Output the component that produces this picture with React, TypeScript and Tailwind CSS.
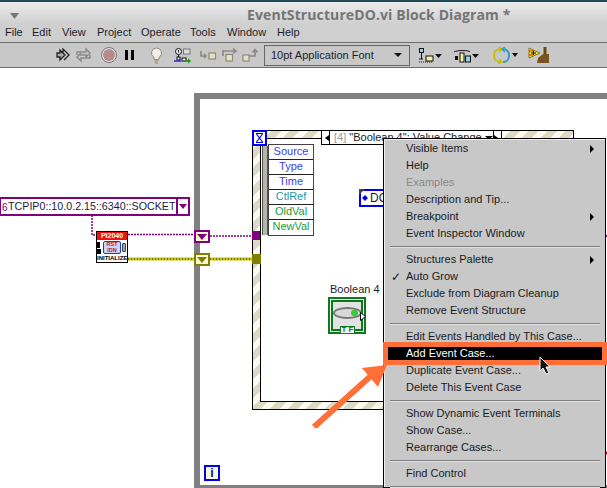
import React from "react";

type Item = { label?: string; sub?: boolean; check?: boolean; off?: boolean; active?: boolean; sep?: boolean };

const menuItems: Item[] = [
  { label: "Visible Items", sub: true },
  { label: "Help" },
  { label: "Examples", off: true },
  { label: "Description and Tip..." },
  { label: "Breakpoint", sub: true },
  { label: "Event Inspector Window" },
  { sep: true },
  { label: "Structures Palette", sub: true },
  { label: "Auto Grow", check: true },
  { label: "Exclude from Diagram Cleanup" },
  { label: "Remove Event Structure" },
  { sep: true },
  { label: "Edit Events Handled by This Case..." },
  { label: "Add Event Case...", active: true },
  { label: "Duplicate Event Case..." },
  { label: "Delete This Event Case" },
  { sep: true },
  { label: "Show Dynamic Event Terminals" },
  { label: "Show Case..." },
  { label: "Rearrange Cases..." },
  { sep: true },
  { label: "Find Control" },
  { sep: true },
];

const menuBar = [
  ["File", "w-[27px]"],
  ["Edit", "w-[30px]"],
  ["View", "w-[35px]"],
  ["Project", "w-[44px]"],
  ["Operate", "w-[49px]"],
  ["Tools", "w-[37px]"],
  ["Window", "w-[50px]"],
  ["Help", "w-[30px]"],
];

const nodeRows = [
  ["Source", "text-[#3b3bf5]"],
  ["Type", "text-[#3b3bf5]"],
  ["Time", "text-[#3b3bf5]"],
  ["CtlRef", "text-[#1f97a6]"],
  ["OldVal", "text-[#1f9a3c]"],
  ["NewVal", "text-[#1f9a3c]"],
];

const stripes = "bg-[repeating-linear-gradient(135deg,#dcdac4_0px,#dcdac4_7px,#fbfaf0_7px,#fbfaf0_13px)]";

function Toolbar() {
  return (
    <div className="flex h-[26px] items-center border-y border-[#6e6e6e] bg-[#c8c8c8] pl-[56px]">
      <svg width="14" height="15" viewBox="0 0 14 15" fill="none" stroke="#222" strokeWidth="1.3">
        <path d="M1 5h3V2l5 5-5 5V9H1z" fill="#aaa" />
        <path d="M5 4h2V1l6 6-5 5" />
      </svg>
      <svg className="ml-[5px]" width="17" height="16" viewBox="0 0 17 16" fill="none" stroke="#8a8a8a" strokeWidth="1.5">
        <path d="M2 8V5h9V2l4 4-4 4V8H5" />
        <path d="M15 8v3H6v3l-4-4 4-4" />
      </svg>
      <div className="ml-[9px] flex h-4 w-4 items-center justify-center rounded-full border border-[#777] bg-[#e3e3e3]">
        <div className="h-3 w-3 rounded-full bg-[#b98a8c]" />
      </div>
      <div className="ml-[8px] flex gap-[3px]">
        <div className="h-[10px] w-[3px] bg-black" />
        <div className="h-[10px] w-[3px] bg-black" />
      </div>
      <svg className="ml-[16px]" width="13" height="17" viewBox="0 0 13 17" fill="#efefe6" stroke="#8a8a80">
        <path d="M6.5 1a5 5 0 0 0-3 9c.6.6.7 1.5.7 2.5h4.6c0-1 .1-1.9.7-2.5a5 5 0 0 0-3-9z" />
        <path d="M4.5 14h4M5 16h3" stroke="#9a8a40" />
      </svg>
      <svg className="ml-[11px]" width="17" height="17" viewBox="0 0 17 17" fill="none">
        <circle cx="4.5" cy="4.5" r="3" fill="#eee" stroke="#111" />
        <path d="M4.5 3v2.5" stroke="#111" />
        <rect x="9.5" y="2" width="6.5" height="5" fill="#ddd" stroke="#777" />
        <path d="M4.5 8v4" stroke="#111" />
        <rect x="3" y="10" width="3" height="3" fill="#eee" stroke="#111" />
        <path d="M0 14h7" stroke="#1a1ae0" strokeWidth="1.4" />
        <rect x="8" y="11" width="4" height="3" fill="#eee" stroke="#111" />
        <path d="M12 14h3" stroke="#0a9a0a" strokeWidth="1.4" />
        <path d="M14 11.5l3 2.5-3 2.5z" fill="#0a9a0a" />
      </svg>
      <svg className="ml-[9px]" width="17" height="14" viewBox="0 0 17 14" fill="none" stroke="#8a8a80" strokeWidth="1.6">
        <path d="M1 3v5h5M4 6l2 2-2 2" />
        <rect x="9" y="5" width="6.5" height="6" fill="#e6e4b8" strokeWidth="1.2" />
      </svg>
      <svg className="ml-[5px]" width="16" height="16" viewBox="0 0 16 16" fill="none" stroke="#8a8a80" strokeWidth="1.6">
        <path d="M1 9V4h12M11 1.5L14 4l-3 2.5" />
        <rect x="4" y="7.5" width="6.5" height="6.5" fill="#e6e4b8" strokeWidth="1.2" />
      </svg>
      <svg className="ml-[4px]" width="16" height="16" viewBox="0 0 16 16" fill="none" stroke="#8a8a80" strokeWidth="1.6">
        <rect x="1" y="8" width="6" height="6" fill="#e6e4b8" strokeWidth="1.2" />
        <path d="M7 9h6V3M10.5 5.5L13 2.5l2.5 3" />
      </svg>
      <div className="ml-[6px] flex h-[21px] w-[146px] items-center justify-between border border-[#666] pl-[6px] pr-[7px] text-[11px] text-[#1c1c2c]">
        <span>10pt Application Font</span>
        <span className="h-0 w-0 border-x-[4px] border-t-[4px] border-x-transparent border-t-[#111]" />
      </div>
      <svg className="ml-[9px]" width="24" height="15" viewBox="0 0 24 15" fill="none">
        <rect x="0.5" y="0.5" width="4" height="4" fill="#8fd0ee" stroke="#111" />
        <path d="M2.5 5v6M0 11h4" stroke="#111" />
        <rect x="7" y="8" width="7" height="5" fill="#f3f3a8" stroke="#111" />
        <path d="M0 14h14" stroke="#111" strokeDasharray="1 1" />
        <path d="M16 6h7l-3.5 4z" fill="#111" />
      </svg>
      <svg className="ml-[11px]" width="26" height="15" viewBox="0 0 26 15" fill="none">
        <path d="M0 4c3-2 15-2 16 0" stroke="#111" />
        <rect x="1" y="8" width="3" height="4" fill="#111" />
        <rect x="6" y="5" width="4" height="9" fill="#f3f3a8" stroke="#111" />
        <rect x="11.500" y="8" width="5" height="6" fill="#8fd0ee" stroke="#111" />
        <path d="M18 6h7l-3.500 4z" fill="#111" />
      </svg>
      <svg className="ml-[12px]" width="26" height="17" viewBox="0 0 26 17" fill="none" strokeWidth="2">
        <path d="M9 2C4 2 2 5 2 8.500S4 15 9 15" stroke="#c9c200" />
        <path d="M6 0l4 2-3 3M7 12l3 3-4 2" stroke="#c9c200" strokeWidth="1.500" />
        <path d="M11 2c4 0 6 3 6 6.500S15 15 11 15" stroke="#2f9fc0" />
        <path d="M13 0l-3 2 3 3" stroke="#2f9fc0" strokeWidth="1.500" />
        <path d="M20 6h6l-3 4z" fill="#111" stroke="none" />
      </svg>
      <svg className="ml-[10px]" width="22" height="18" viewBox="0 0 22 18" fill="none">
        <path d="M1 2l11 5-11 5z" fill="#f1e42a" stroke="#8a7a10" />
        <path d="M1 5H6M1 9H5" stroke="#e01818" />
        <path d="M3 7h5M5.500 5v4" stroke="#111" />
        <path d="M17 1v8" stroke="#6b4a18" strokeWidth="3" />
        <path d="M10 12l5-4h6v9H9z" fill="#7a5420" />
      </svg>
    </div>
  );
}

function Wires() {
  return (
    <svg className="absolute left-0 top-0" width="607" height="420" viewBox="0 0 607 420" fill="none">
      <path d="M92 147v20h5" stroke="#800080" strokeWidth="1.500" strokeDasharray="2 1" />
      <path d="M128 166.500h67M210 168H384" stroke="#800080" strokeWidth="1.500" strokeDasharray="2 1" />
      <path d="M128 191H195M210 191H384" stroke="#c8c400" strokeWidth="3" />
      <path d="M128 191H195M210 191H384" stroke="#222" strokeWidth="1" strokeDasharray="1 2" />
      <path d="M365 248H384" stroke="#0a7a1a" strokeDasharray="1 1" />
      <path d="M605 168h2" stroke="#800080" strokeWidth="2" />
      <path d="M605 385h2" stroke="#d01010" strokeWidth="3" />
    </svg>
  );
}

function Diagram() {
  return (
    <>
      {/* while loop frame */}
      <div className="absolute left-[194px] top-[25px] h-[395px] w-[420px] border-b-[3px] border-l-[6px] border-t-[6px] border-[#808080]" />
      <div className="absolute left-[204px] top-[397px] flex h-4 w-4 items-center justify-center border-2 border-[#0000ee] bg-[#fbfbd2] text-[12px] font-bold leading-none text-[#0000ee]">
        i
      </div>

      {/* event structure */}
      <div className={`absolute left-[252px] top-[62px] h-[280px] w-[322px] border border-black p-[7px] ${stripes}`}>
        <div className="h-full w-full border border-black bg-white" />
      </div>
      <div className="absolute left-[252px] top-[62px] flex h-[16px] w-[15px] items-center justify-center border-2 border-[#0000ee] bg-white">
        <svg width="9" height="10" viewBox="0 0 9 10" fill="none" stroke="#0000ee" strokeWidth="1.200">
          <path d="M1 .5h7M1 9.500h7M1.500 1l6 8M7.500 1l-6 8" />
        </svg>
      </div>
      <div className="absolute left-[262px] top-[78px] h-[89px] w-[6px] border-x border-[#555] bg-[#b4b4a8]" />
      <div className="absolute left-[268px] top-[76px] w-[46px] border border-[#444] bg-white">
        {nodeRows.map(([label, color]) => (
          <div key={label} className={`h-[15px] border-b border-[#222] text-center text-[11px] leading-[12px] last:border-b-0 ${color}`}>
            {label}
          </div>
        ))}
      </div>
      <div className="absolute left-[252px] top-[163px] h-[9px] w-[8px] bg-[#800080]" />
      <div className="absolute left-[252px] top-[186px] h-[10px] w-[9px] bg-[#808000]" />

      {/* case selector */}
      <div className="absolute left-[321px] top-[62px] flex h-[15px] w-[181px] items-center border border-black bg-white text-[11px] text-[#1c1c1c]">
        <div className="flex h-full w-[8px] items-center justify-end border-r border-black">
          <span className="h-0 w-0 border-y-[3px] border-r-[4px] border-y-transparent border-r-black" />
        </div>
        <span className="ml-[4px] whitespace-nowrap">
          <span className="text-[#9a9a9a]">[4]</span> "Boolean 4": Value Change
        </span>
        <span className="ml-[3px] h-0 w-0 border-x-[4px] border-t-[4px] border-x-transparent border-t-[#111]" />
        <div className="ml-auto flex h-full w-[8px] items-center border-l border-black">
          <span className="h-0 w-0 border-y-[3px] border-l-[4px] border-y-transparent border-l-black" />
        </div>
      </div>

      {/* local variable */}
      <div className="absolute left-[359px] top-[121px] flex h-[18px] w-[40px] items-center border-2 border-[#0000ee] bg-white pl-[1px] text-[12px] text-[#1c1c1c]">
        <span className="h-0 w-0 border-y-[3px] border-r-[3px] border-y-transparent border-r-[#0000ee]" />
        <span className="h-0 w-0 border-y-[3px] border-l-[3px] border-y-transparent border-l-[#0000ee]" />
        <span className="ml-[2px]">DO</span>
      </div>
      <div className="absolute left-[359px] top-[121px] h-0 w-0 border-r-[6px] border-t-[6px] border-r-transparent border-t-[#444]" />

      {/* boolean 4 terminal */}
      <div className="absolute left-[330px] top-[214px] text-[11px] leading-[14px] text-[#1c1c2c]">Boolean 4</div>
      <div className="absolute left-[328px] top-[229px] h-[37px] w-[38px] border-2 border-[#0a7a1a] bg-white p-[1px]">
        <div className="flex h-full w-full items-center justify-center border-2 border-[#0a7a1a] bg-[#e2e2e2] pb-[5px]">
          <div className="relative h-[12px] w-[29px] shrink-0 rounded-[50%] border-2 border-[#777] bg-[#d8d8d8]">
            <div className="absolute right-[2px] top-[1px] h-[6px] w-[7px] rounded-full bg-[#2fd02f]" />
          </div>
        </div>
      </div>
      <svg className="absolute left-[360px] top-[244px]" width="6" height="9" viewBox="0 0 6 9">
        <path d="M.5.5v8l5-4z" fill="#fff" stroke="#111" />
      </svg>
      <div className="absolute left-[340px] top-[258px] flex h-[8px] w-[15px] items-center justify-center gap-[2px] border border-[#0a7a1a] bg-white text-[8px] font-bold leading-none text-[#0a7a1a]">
        <span>T</span>
        <span>F</span>
      </div>

      {/* visa constant */}
      <div className="absolute left-[-1px] top-[129px] flex h-[19px] w-[191px] items-center border-2 border-[#800080] bg-white text-[10.700px] text-[#1c1c3c]">
        <span className="absolute left-[1px] top-[4px] text-[10px] leading-none text-[#800080]">6</span>
        <span className="ml-[7px] whitespace-nowrap">TCPIP0::10.0.2.15::6340::SOCKET</span>
        <div className="ml-auto flex h-full w-[13px] items-center justify-center border-l-2 border-[#800080]">
          <span className="h-0 w-0 border-x-[4px] border-t-[5px] border-x-transparent border-t-[#800080]" />
        </div>
      </div>

      {/* subvi */}
      <div className="absolute left-[96px] top-[163px] h-[32px] w-[32px] overflow-hidden border border-black bg-white">
        <div className="h-[8px] bg-[#f01010] text-center text-[7px] font-bold leading-[8px] text-white">PI2040</div>
        <div className="flex h-[15px] items-center">
          <div className="flex flex-col gap-[1px]">
            <div className="h-[6px] w-[3px] bg-black" />
            <div className="h-[5px] w-[4px] bg-black" />
          </div>
          <div className="ml-[2px] h-[13px] w-[18px] rounded-[2px] border border-[#1a3ad0] bg-[#c8d8f8] text-center text-[5.500px] font-bold leading-[5.500px] text-[#d01010]">
            RST
            <br />
            IDN
          </div>
          <div className="ml-[1px] h-[9px] w-[4px] rounded-[1px] border border-[#444] bg-[#9aa89a]" />
        </div>
        <div className="whitespace-nowrap text-center text-[6px] font-bold leading-[7px] text-black">INITIALIZE</div>
      </div>

      {/* tunnels */}
      <div className="absolute left-[194px] top-[162px] flex h-[13px] w-[16px] items-center justify-center border-2 border-[#800080] bg-[#fbfbd2]">
        <span className="h-0 w-0 border-x-[5px] border-t-[6px] border-x-transparent border-t-[#800080]" />
      </div>
      <div className="absolute left-[194px] top-[185px] flex h-[13px] w-[16px] items-center justify-center border-2 border-[#808000] bg-[#fbfbd2]">
        <span className="h-0 w-0 border-x-[5px] border-t-[6px] border-x-transparent border-t-[#808000]" />
      </div>
    </>
  );
}

function ContextMenu() {
  return (
    <div className="absolute left-[383px] top-[70px] h-[350px] w-[223px] border border-black bg-[#c8c8c8] pl-[1px] pt-[1px] text-[11px] text-[#1a1a22] shadow-[inset_1px_1px_0_#efefef]">
      {menuItems.map((item, i) =>
        item.sep ? (
          <div key={i} className="mx-[5px] mb-[3px] mt-[4px] h-[2px] border-t border-[#7d7d7d] bg-[#e4e4e4]" />
        ) : (
          <div
            key={i}
            className={`relative flex h-[17px] items-center pl-[21px] leading-none ${item.active ? "bg-black text-white" : ""} ${item.off ? "text-[#8a8a8a]" : ""}`}
          >
            {item.check && <span className="absolute left-[6px] text-[12px]">✓</span>}
            {item.label}
            {item.sub && (
              <span className="absolute right-[11px] h-0 w-0 border-y-[4px] border-l-[4px] border-y-transparent border-l-black" />
            )}
          </div>
        ),
      )}
    </div>
  );
}

function Callout() {
  return (
    <>
      <div className="absolute left-[383px] top-[274px] h-[23px] w-[224px] border-[5px] border-[#ff6f37]" />
      <svg className="absolute left-[305px] top-[290px]" width="90" height="70" viewBox="0 0 90 70" fill="none">
        <path d="M9 69L68 16" stroke="#ff6f37" strokeWidth="6" />
        <path d="M82 7L57 10L73 29z" fill="#ff6f37" />
      </svg>
      <svg className="absolute left-[539px] top-[288px]" width="13" height="20" viewBox="0 0 13 20">
        <path d="M1 1v14l3-3 3 6 3-1-3-6h4z" fill="#111" stroke="#fff" />
      </svg>
    </>
  );
}

export default function App() {
  return (
    <div className="flex h-[488px] w-[607px] flex-col overflow-hidden bg-white font-['Liberation_Sans',sans-serif]">
      <div className="h-[2px] bg-[#1e4a57]" />
      <div className="relative h-[22px] bg-gradient-to-b from-[#ececec] to-[#cfcfcf]">
        <svg className="absolute left-[10px] top-[11px]" width="9" height="6" viewBox="0 0 9 6">
          <path d="M0 0h9L4.500 6z" fill="#777" />
        </svg>
        <div className="pl-[247px] pt-[3px] font-['Open_Sans',sans-serif] text-[14px] font-bold leading-[20px] tracking-[0.1px] text-[#757575]">
          EventStructureDO.vi Block Diagram *
        </div>
      </div>
      <div className="flex h-[18px] items-center bg-[#cfcfcf] pb-[2px] pl-[5px] text-[11px] text-[#1c1c2c]">
        {menuBar.map(([label, w]) => (
          <div key={label} className={w}>
            {label}
          </div>
        ))}
      </div>
      <Toolbar />
      <div className="relative flex-1">
        <Wires />
        <Diagram />
        <ContextMenu />
        <Callout />
      </div>
    </div>
  );
}
